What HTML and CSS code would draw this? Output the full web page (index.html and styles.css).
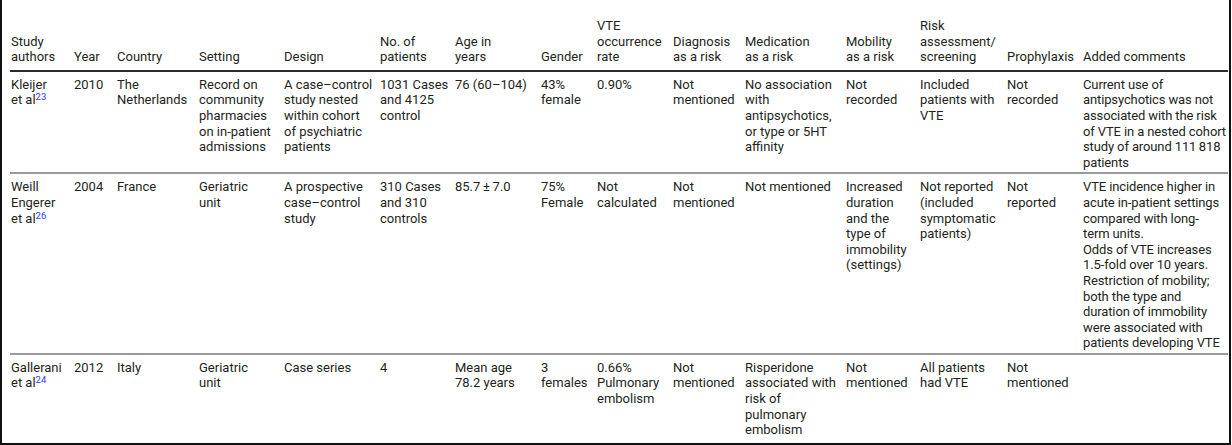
FILE: index.html
```html
<!DOCTYPE html>
<html lang="en">
<head>
<meta charset="utf-8">
<title>VTE studies table</title>
<link rel="stylesheet" href="styles.css">
</head>
<body>
<div class="frame">
  <table class="data">
    <colgroup>
      <col class="c-author"><col class="c-year"><col class="c-country"><col class="c-setting"><col class="c-design"><col class="c-num"><col class="c-age"><col class="c-gender"><col class="c-rate"><col class="c-diag"><col class="c-med"><col class="c-mob"><col class="c-risk"><col class="c-proph"><col class="c-comm">
    </colgroup>
    <thead>
      <tr>
        <th>Study<br>authors</th>
        <th>Year</th>
        <th>Country</th>
        <th>Setting</th>
        <th>Design</th>
        <th>No. of<br>patients</th>
        <th>Age in<br>years</th>
        <th>Gender</th>
        <th>VTE<br>occurrence<br>rate</th>
        <th>Diagnosis<br>as a risk</th>
        <th>Medication<br>as a risk</th>
        <th>Mobility<br>as a risk</th>
        <th>Risk<br>assessment/<br>screening</th>
        <th>Prophylaxis</th>
        <th class="last">Added comments</th>
      </tr>
    </thead>
    <tbody>
      <tr>
        <td>Kleijer et&nbsp;al<sup class="ref">23</sup></td>
        <td>2010</td>
        <td>The Netherlands</td>
        <td>Record on community pharmacies on in-patient admissions</td>
        <td>A case–control study nested within cohort of psychiatric patients</td>
        <td>1031&nbsp;Cases and 4125 control</td>
        <td>76 (60–104)</td>
        <td>43% female</td>
        <td>0.90%</td>
        <td>Not mentioned</td>
        <td>No association with antipsychotics, or type or 5HT affinity</td>
        <td>Not recorded</td>
        <td>Included patients with VTE</td>
        <td>Not recorded</td>
        <td class="last">Current use of antipsychotics was not associated with the risk of VTE in a nested cohort study of around 111&#8201;818 patients</td>
      </tr>
      <tr>
        <td>Weill Engerer et&nbsp;al<sup class="ref">26</sup></td>
        <td>2004</td>
        <td>France</td>
        <td>Geriatric<br>unit</td>
        <td>A prospective case–control study</td>
        <td>310 Cases and 310 controls</td>
        <td>85.7&#8201;±&#8201;7.0</td>
        <td>75% Female</td>
        <td>Not calculated</td>
        <td>Not mentioned</td>
        <td>Not mentioned</td>
        <td>Increased duration and the type of immobility (settings)</td>
        <td>Not reported (included symptomatic patients)</td>
        <td>Not reported</td>
        <td class="last">VTE incidence higher in acute in-patient settings compared with long-<br>term units.<br>Odds of VTE increases 1.5-fold over 10 years.<br>Restriction of mobility; both the type and duration of immobility were associated with patients developing VTE</td>
      </tr>
      <tr>
        <td>Gallerani et&nbsp;al<sup class="ref">24</sup></td>
        <td>2012</td>
        <td>Italy</td>
        <td>Geriatric<br>unit</td>
        <td>Case series</td>
        <td>4</td>
        <td>Mean age 78.2 years</td>
        <td>3 females</td>
        <td>0.66% Pulmonary embolism</td>
        <td>Not mentioned</td>
        <td>Risperidone associated with risk of pulmonary embolism</td>
        <td>Not mentioned</td>
        <td>All patients had VTE</td>
        <td>Not mentioned</td>
        <td class="last"></td>
      </tr>
    </tbody>
  </table>
</div>
</body>
</html>
```
FILE: styles.css
```css
html, body {
  margin: 0;
  padding: 0;
  background: #ffffff;
}

.frame {
  box-sizing: border-box;
  width: 1231px;
  height: 445px;
  border-left: 2px solid #111;
  border-right: 2px solid #111;
  border-bottom: 2px solid #111;
  padding: 18px 0 0 8px;
  overflow: hidden;
}

.data {
  table-layout: fixed;
  width: 1218px;
  border-collapse: collapse;
  font-family: Roboto, "Liberation Sans", sans-serif;
  font-size: 13px;
  line-height: 15.6px;
  color: #231f20;
}

.data th {
  font-weight: normal;
  text-align: left;
  vertical-align: bottom;
  padding: 0 6px 5px 1px;
}

.data td {
  text-align: left;
  vertical-align: top;
  padding: 5px 6px 2px 1px;
}

.data th.last,
.data td.last {
  padding-right: 0;
}

.data td.last {
  letter-spacing: -0.12px;
}

.data thead tr {
  border-bottom: 2px solid #2b2b2b;
}

.data tbody tr {
  border-bottom: 2px solid #9a9a9a;
}

.data tbody tr:last-child {
  border-bottom: none;
}

.ref {
  color: #3333ff;
  font-size: 9.5px;
  line-height: 0;
  vertical-align: 4px;
}

.c-author { width: 63px; }
.c-year { width: 43px; }
.c-country { width: 82px; }
.c-setting { width: 85px; }
.c-design { width: 96px; }
.c-num { width: 75px; }
.c-age { width: 86px; }
.c-gender { width: 56px; }
.c-rate { width: 76px; }
.c-diag { width: 72px; }
.c-med { width: 101px; }
.c-mob { width: 74px; }
.c-risk { width: 87px; }
.c-proph { width: 76px; }
.c-comm { width: 146px; }
```
